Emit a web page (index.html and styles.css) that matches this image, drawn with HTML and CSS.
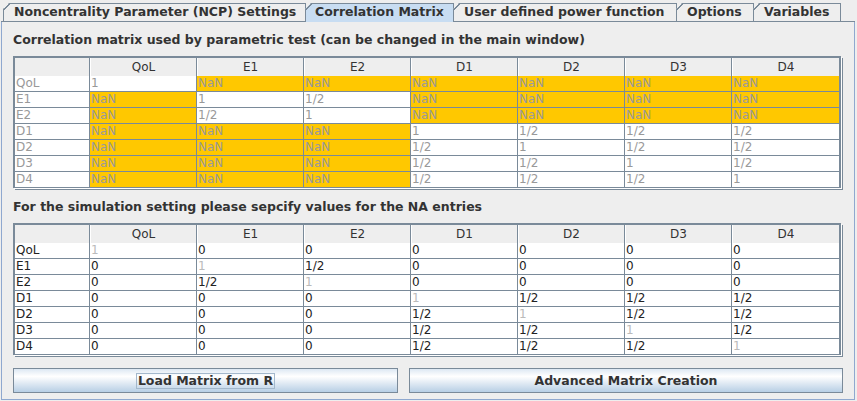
FILE: index.html
```html
<!DOCTYPE html>
<html>
<head>
<meta charset="utf-8">
<link rel="stylesheet" href="styles.css">
</head>
<body>
<div class="tabs">
  <div class="tab t1">Noncentrality Parameter (NCP) Settings</div>
  <div class="tab sel t2">Correlation Matrix</div>
  <div class="tab t3">User defined power function</div>
  <div class="tab t4">Options</div>
  <div class="tab t5">Variables</div>
</div>
<div class="panel">
  <div class="lbl">Correlation matrix used by parametric test (can be changed in the main window)</div>
  <div class="grid g1">
    <div class="h"></div><div class="h">QoL</div><div class="h">E1</div><div class="h">E2</div><div class="h">D1</div><div class="h">D2</div><div class="h">D3</div><div class="h">D4</div>
    <div class="c">QoL</div><div class="c">1</div><div class="c nan">NaN</div><div class="c nan">NaN</div><div class="c nan">NaN</div><div class="c nan">NaN</div><div class="c nan">NaN</div><div class="c nan">NaN</div>
    <div class="c">E1</div><div class="c nan">NaN</div><div class="c">1</div><div class="c">1/2</div><div class="c nan">NaN</div><div class="c nan">NaN</div><div class="c nan">NaN</div><div class="c nan">NaN</div>
    <div class="c">E2</div><div class="c nan">NaN</div><div class="c">1/2</div><div class="c">1</div><div class="c nan">NaN</div><div class="c nan">NaN</div><div class="c nan">NaN</div><div class="c nan">NaN</div>
    <div class="c">D1</div><div class="c nan">NaN</div><div class="c nan">NaN</div><div class="c nan">NaN</div><div class="c">1</div><div class="c">1/2</div><div class="c">1/2</div><div class="c">1/2</div>
    <div class="c">D2</div><div class="c nan">NaN</div><div class="c nan">NaN</div><div class="c nan">NaN</div><div class="c">1/2</div><div class="c">1</div><div class="c">1/2</div><div class="c">1/2</div>
    <div class="c">D3</div><div class="c nan">NaN</div><div class="c nan">NaN</div><div class="c nan">NaN</div><div class="c">1/2</div><div class="c">1/2</div><div class="c">1</div><div class="c">1/2</div>
    <div class="c">D4</div><div class="c nan">NaN</div><div class="c nan">NaN</div><div class="c nan">NaN</div><div class="c">1/2</div><div class="c">1/2</div><div class="c">1/2</div><div class="c">1</div>
  </div>
  <div class="lbl lbl2">For the simulation setting please sepcify values for the NA entries</div>
  <div class="grid g2">
    <div class="h"></div><div class="h">QoL</div><div class="h">E1</div><div class="h">E2</div><div class="h">D1</div><div class="h">D2</div><div class="h">D3</div><div class="h">D4</div>
    <div class="c">QoL</div><div class="c dg">1</div><div class="c">0</div><div class="c">0</div><div class="c">0</div><div class="c">0</div><div class="c">0</div><div class="c">0</div>
    <div class="c">E1</div><div class="c">0</div><div class="c dg">1</div><div class="c">1/2</div><div class="c">0</div><div class="c">0</div><div class="c">0</div><div class="c">0</div>
    <div class="c">E2</div><div class="c">0</div><div class="c">1/2</div><div class="c dg">1</div><div class="c">0</div><div class="c">0</div><div class="c">0</div><div class="c">0</div>
    <div class="c">D1</div><div class="c">0</div><div class="c">0</div><div class="c">0</div><div class="c dg">1</div><div class="c">1/2</div><div class="c">1/2</div><div class="c">1/2</div>
    <div class="c">D2</div><div class="c">0</div><div class="c">0</div><div class="c">0</div><div class="c">1/2</div><div class="c dg">1</div><div class="c">1/2</div><div class="c">1/2</div>
    <div class="c">D3</div><div class="c">0</div><div class="c">0</div><div class="c">0</div><div class="c">1/2</div><div class="c">1/2</div><div class="c dg">1</div><div class="c">1/2</div>
    <div class="c">D4</div><div class="c">0</div><div class="c">0</div><div class="c">0</div><div class="c">1/2</div><div class="c">1/2</div><div class="c">1/2</div><div class="c dg">1</div>
  </div>
  <div class="btns">
    <div class="btn b1"><span class="focus">Load Matrix from R</span></div>
    <div class="btn b2">Advanced Matrix Creation</div>
  </div>
</div>
</body>
</html>
```
FILE: styles.css
```css
* { box-sizing: border-box; }
html, body { margin: 0; padding: 0; }
body {
  width: 857px;
  height: 401px;
  overflow: hidden;
  background: #eeeeee;
  font-family: "DejaVu Sans", "Liberation Sans", sans-serif;
  color: #333333;
}

/* tabs */
.tabs {
  display: flex;
  align-items: flex-end;
  height: 22px;
  margin: 0 2px 0 1px;
  padding: 3px 0 0 2px;
  border-bottom: 1px solid #7a8a99;
}
.tab {
  position: relative;
  height: 18px;
  margin-left: -1px;
  padding-left: 10px;
  border: 1px solid #7a8a99;
  border-bottom: none;
  background: #eeeeee;
  font-weight: bold;
  font-size: 12.5px;
  line-height: 15px;
  white-space: nowrap;
  color: #333333;
  clip-path: polygon(6px 0, 100% 0, 100% 100%, 0 100%, 0 6px);
}
.tab::before {
  content: "";
  position: absolute;
  left: -1px;
  top: -1px;
  width: 7px;
  height: 7px;
  background: linear-gradient(to bottom right, transparent 46%, #7a8a99 46%, #7a8a99 64%, transparent 64%);
}
.tab.t1 { margin-left: 0; width: 303px; }
.tab.t2 { width: 149px; }
.tab.t3 { width: 224px; }
.tab.t4 { width: 78px; }
.tab.t5 { width: 88px; }
.tab.sel {
  height: 19px;
  margin-bottom: -1px;
  padding-left: 9px;
  background: #c8ddf2;
}

/* panel */
.panel {
  height: 378px;
  margin: 0 2px 0 1px;
  padding: 10px 11px 0 11px;
  border: 1px solid #8fa8cf;
  border-top: none;
}
.lbl {
  height: 16px;
  font-weight: bold;
  font-size: 12.5px;
  line-height: 16px;
  white-space: nowrap;
  color: #333333;
  margin-bottom: 8px;
}
.lbl2 { margin-top: 11px; }

/* tables */
.grid {
  display: grid;
  grid-template-columns: 75px repeat(7, 107px);
  width: 828px;
  border-top: 2px solid #7a8a99;
  border-left: 2px solid #7a8a99;
  border-right: 2px solid #7a8a99;
  background: #ffffff;
  box-shadow: 1px 1px 0 #ffffff, 2px 2px 0 #7a8a99;
  font-size: 12px;
}
.h {
  height: 18px;
  padding-top: 1px;
  line-height: 16px;
  text-align: center;
  background: #eeeeee;
  color: #333333;
  border-left: 1px solid #ffffff;
  border-right: 1px solid #7a8a99;
}
.h:first-child { border-left: none; }
.c {
  height: 16px;
  line-height: 15px;
  padding-left: 1px;
  border-right: 1px solid #7a8a99;
  border-bottom: 1px solid #7a8a99;
  background: #ffffff;
  white-space: nowrap;
  overflow: hidden;
}
.grid > :nth-child(8n) { border-right: none; }
.g1 .c { color: #999999; }
.g1 .c.nan { background: #ffc800; }
.g2 .c { color: #222222; }
.g2 .c.dg { color: #bbbbbb; }

/* buttons */
.btns {
  display: flex;
  gap: 11px;
  margin-top: 13px;
}
.btn {
  height: 25px;
  display: flex;
  align-items: center;
  justify-content: center;
  border: 1px solid #7a8a99;
  background: linear-gradient(to bottom, #dde8f3 0%, #ffffff 32%, #b8cfe5 100%);
  font-weight: bold;
  font-size: 12.5px;
  color: #333333;
  white-space: nowrap;
}
.b1 { width: 385px; }
.b2 { flex: 1; }
.focus {
  height: 16px;
  line-height: 14px;
  padding: 0 1px;
  border: 1px solid #a3b8cc;
}
```
